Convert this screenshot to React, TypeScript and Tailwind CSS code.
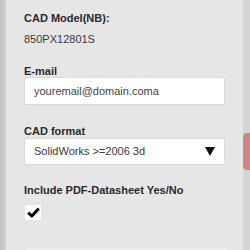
function Label({ children, className = '' }: { children: React.ReactNode; className?: string }) {
  return (
    <div className={`text-[11px] font-bold leading-[12px] text-[#2a2a2a] ${className}`}>
      {children}
    </div>
  )
}

export default function App() {
  return (
    <div
      className="flex h-[250px] w-[250px] overflow-hidden bg-[#d6d6d6]"
      style={{ fontFamily: '"Liberation Sans", Arial, sans-serif' }}
    >
      {/* left gutter */}
      <div className="w-[6px] shrink-0 bg-gradient-to-r from-[#c4c4c4] to-[#cfcfcf]" />

      {/* form panel */}
      <div className="relative flex w-[237px] shrink-0 flex-col bg-[#e6e6e6] px-[18px] pt-[12px]">
        <Label>CAD Model(NB):</Label>
        <div className="mt-[8px] text-[11px] leading-[14px] text-[#3a3a3a]">850PX12801S</div>

        <Label className="mt-[19px]">E-mail</Label>
        <div className="flex h-[28px] w-[201px] items-center rounded-[2px] border border-[#d9d9d9] bg-white pl-[9px] text-[11px] text-[#444]">
          youremail@domain.coma
        </div>

        <Label className="mt-[20px]">CAD format</Label>
        <div className="mt-[1px] flex h-[27px] w-[201px] items-center justify-between rounded-[2px] border border-[#d9d9d9] bg-white pl-[9px] pr-[9px] text-[11px] text-[#3a3a3a]">
          <span>SolidWorks &gt;=2006 3d</span>
          <svg width="10" height="9" viewBox="0 0 10 9">
            <polygon points="0,0 10,0 5,9" fill="#111" />
          </svg>
        </div>

        <Label className="mt-[19px]">Include PDF-Datasheet Yes/No</Label>
        <div className="ml-[1px] mt-[9px] flex h-[15px] w-[16px] items-center justify-center rounded-[2px] bg-white">
          <svg width="13" height="11" viewBox="0 0 13 11">
            <path d="M1.2 5.6 L4.8 9 L11.8 1.6" fill="none" stroke="#000" strokeWidth="3" strokeLinejoin="round" />
          </svg>
        </div>

        {/* top edge of the next row */}
        <div className="absolute bottom-0 left-[20px] right-[16px] h-[2px] bg-[#ededed]" />
      </div>

      {/* right gutter with tab */}
      <div className="flex w-[7px] shrink-0 flex-col bg-[#d4d4d4] pt-[133px]">
        <div className="h-[37px] w-full rounded-l-[4px] bg-[#d98282]" />
      </div>
    </div>
  )
}
